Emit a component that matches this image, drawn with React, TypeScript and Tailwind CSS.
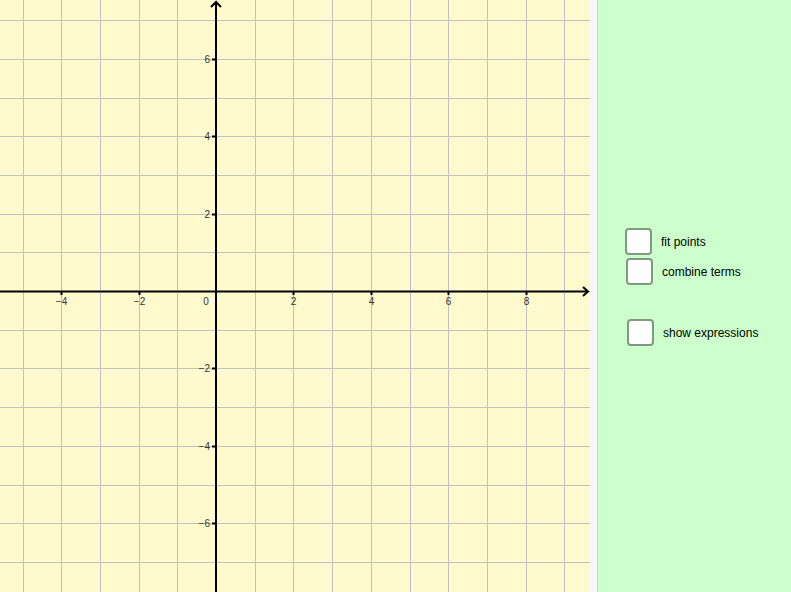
import React from "react";

const U = 38.7;
const OX = 216;
const OY = 291;
const W = 590;
const H = 592;

function Graph() {
  const vLines: number[] = [];
  for (let k = -5; k <= 9; k++) vLines.push(Math.round(OX + k * U) + 0.5);
  const hLines: number[] = [];
  for (let k = -7; k <= 7; k++) hLines.push(Math.round(OY - k * U) + 0.5);
  const xLabels = [-4, -2, 2, 4, 6, 8];
  const yLabels = [6, 4, 2, -2, -4, -6];
  const fmt = (n: number) => (n < 0 ? "\u2212" + Math.abs(n) : String(n));
  return (
    <svg width={W} height={H} viewBox={`0 0 ${W} ${H}`} className="block">
      <rect x={0} y={0} width={W} height={H} fill="#fffacd" />
      {vLines.map((x) => (
        <line key={"v" + x} x1={x} y1={0} x2={x} y2={H} stroke="#c0c0c0" strokeWidth={1} />
      ))}
      {hLines.map((y) => (
        <line key={"h" + y} x1={0} y1={y} x2={W} y2={y} stroke="#c0c0c0" strokeWidth={1} />
      ))}
      <line x1={0} y1={OY + 0.5} x2={587} y2={OY + 0.5} stroke="#000" strokeWidth={2} />
      <line x1={OX} y1={2} x2={OX} y2={H} stroke="#000" strokeWidth={2} />
      <polyline points={`583,${OY - 4} 588,${OY + 0.5} 583,${OY + 5}`} fill="none" stroke="#000" strokeWidth={2} />
      <polyline points={`${OX - 5},7 ${OX},2 ${OX + 5},7`} fill="none" stroke="#000" strokeWidth={2} />
      {xLabels.map((n) => {
        const x = Math.round(OX + n * U) + 0.5;
        return <line key={"tx" + n} x1={x} y1={OY} x2={x} y2={OY + 4} stroke="#000" strokeWidth={2} />;
      })}
      {yLabels.map((n) => {
        const y = Math.round(OY - n * U) + 0.5;
        return <line key={"ty" + n} x1={OX - 4} y1={y} x2={OX} y2={y} stroke="#000" strokeWidth={2} />;
      })}
      <g fontFamily="'Liberation Sans', Arial, sans-serif" fontSize={10} fill="#333">
        {xLabels.map((n) => (
          <text key={"lx" + n} x={Math.round(OX + n * U) + 0.5} y={OY + 14} textAnchor="middle">
            {fmt(n)}
          </text>
        ))}
        {yLabels.map((n) => (
          <text key={"ly" + n} x={210} y={Math.round(OY - n * U) + 4} textAnchor="end">
            {fmt(n)}
          </text>
        ))}
        <text x={206} y={OY + 14} textAnchor="middle">0</text>
      </g>
    </svg>
  );
}

function Check({ label, ml, mt }: { label: string; ml: string; mt: string }) {
  return (
    <div className={`flex items-center gap-[9px] ${ml} ${mt}`}>
      <div className="w-[27px] h-[27px] rounded-[4px] border-2 border-[#7f9a7f] bg-white" />
      <span className="text-[12px] text-black leading-none pt-px">{label}</span>
    </div>
  );
}

export default function App() {
  return (
    <div
      className="flex w-[791px] h-[592px] overflow-hidden"
      style={{ fontFamily: "'Liberation Sans', Arial, sans-serif" }}
    >
      <div className="w-[590px] h-full shrink-0">
        <Graph />
      </div>
      <div className="w-[7px] h-full bg-[#f8f8f8] shrink-0" />
      <div className="w-px h-full bg-[#d0d0d0] shrink-0" />
      <div className="flex-1 h-full bg-[#ccffcc] flex flex-col pt-[228px]">
        <Check label="fit points" ml="ml-[27px]" mt="mt-0" />
        <Check label="combine terms" ml="ml-[28px]" mt="mt-[3px]" />
        <Check label="show expressions" ml="ml-[29px]" mt="mt-[34px]" />
      </div>
    </div>
  );
}
